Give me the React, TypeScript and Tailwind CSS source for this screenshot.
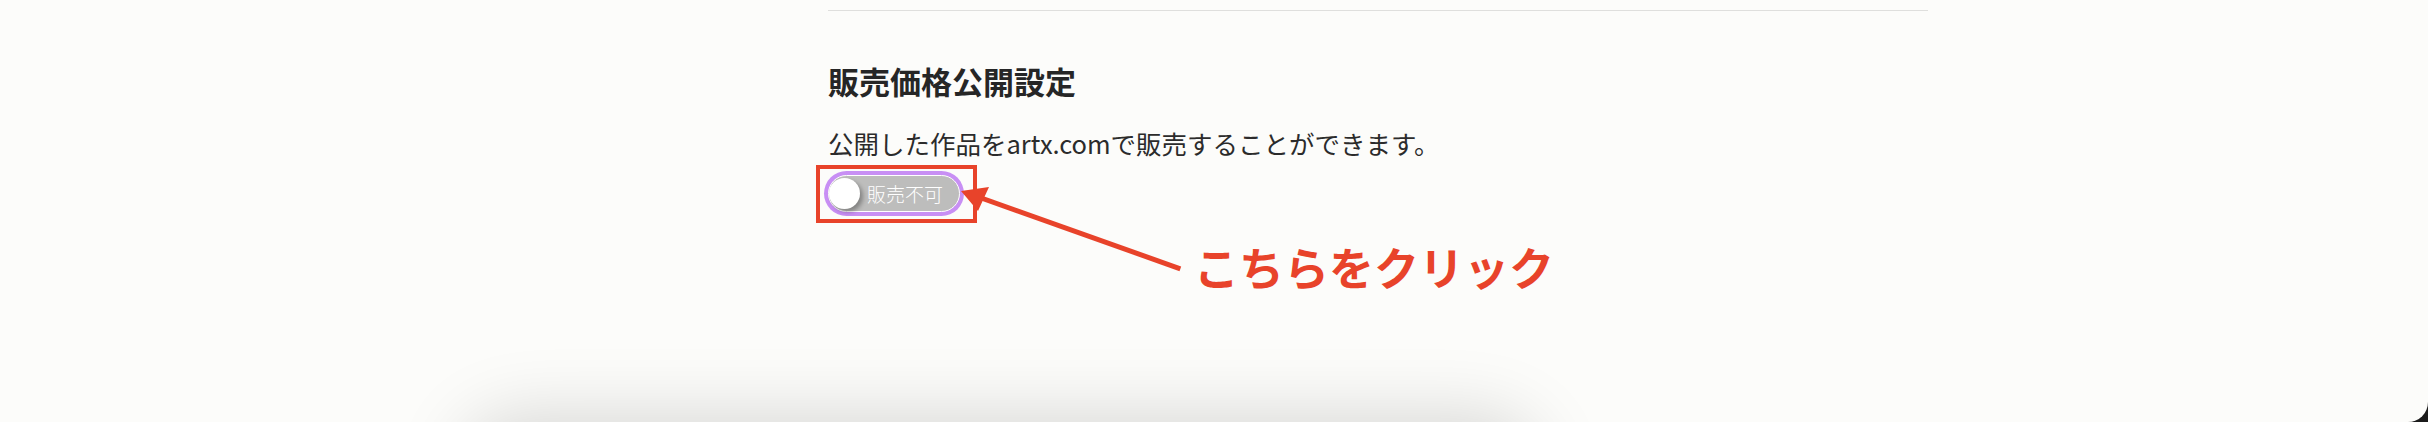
import React from 'react';

const font = { fontFamily: '"Noto Sans CJK JP", "Noto Sans", sans-serif' };

// 販売可否トグル (オフ状態)
const SaleToggle: React.FC<{ label: string }> = ({ label }) => (
  <div className="w-[140px] h-[45px] rounded-full bg-[#c88ff4] p-[4px]">
    <div className="flex h-full items-center rounded-full border border-white bg-[#bdbdbc]">
      <span className="h-[31px] w-[31px] shrink-0 rounded-full bg-white shadow-[3px_3px_4px_rgba(0,0,0,0.3)]" />
      <span className="ml-[7px] text-[19px] font-light leading-none text-white">{label}</span>
    </div>
  </div>
);

const Arrow: React.FC = () => (
  <svg className="pointer-events-none absolute left-0 top-0" width="2428" height="422">
    <line x1="980" y1="197.5" x2="1178" y2="268" stroke="#e8432a" strokeWidth="5" strokeLinecap="square" />
    <polygon points="961,191 989,187 978,211" fill="#e8432a" />
  </svg>
);

export default function App() {
  return (
    <div className="h-[422px] w-full overflow-hidden bg-[#1b1b1b]" style={font}>
      <div className="relative h-[422px] overflow-hidden rounded-br-[20px] bg-[#fcfcfa]">
        <div className="pl-[828px] pt-[10px]">
          <div className="h-px w-[1100px] bg-[#dfdfdd]" />
          <h2 className="mt-[47px] text-[31px] font-bold leading-[46px] text-[#262626]">
            販売価格公開設定
          </h2>
          <p className="mt-[21px] text-[25.5px] leading-[36px] text-[#2b2b2b]">
            公開した作品をartx.comで販売することができます。
          </p>
          <div className="ml-[-12px] mt-[4px] w-[161px] h-[58px] border-[4px] border-[#e8432a] pl-[4px] pt-[2px]">
            <SaleToggle label="販売不可" />
          </div>
        </div>

        <Arrow />
        <div className="absolute left-[1194px] top-[241px] text-[45px] font-bold leading-[52px] text-[#e8432a]">
          こちらをクリック
        </div>

        {/* 下部パネルの影 */}
        <div className="absolute left-[490px] top-[445px] h-[200px] w-[1020px] rounded-[30px] bg-white shadow-[0_0_70px_30px_rgba(0,0,0,0.15)]" />
      </div>
    </div>
  );
}
